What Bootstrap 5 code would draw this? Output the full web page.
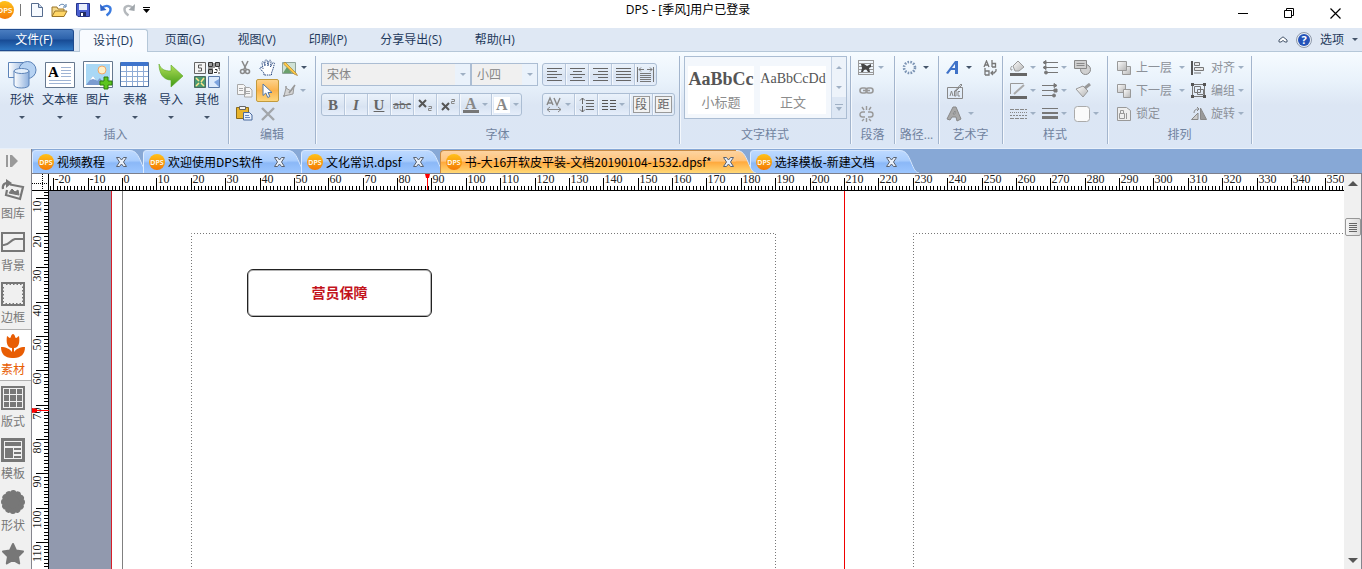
<!DOCTYPE html>
<html lang="zh-CN">
<head>
<meta charset="utf-8">
<meta name="viewport" content="width=device-width, initial-scale=1">
<title>DPS</title>
<link href="https://cdn.jsdelivr.net/npm/bootstrap@5.3.0/dist/css/bootstrap.min.css" rel="stylesheet">
<style>
  body { font: 12px/16px "Open Sans", "Noto Sans CJK SC", sans-serif; color: #1e395b; background: #fff; }
  svg { display: block; flex: none; }
  button { color: inherit; }
  .plain { background: none; border: 0; padding: 0; display: flex; align-items: center; justify-content: center; flex: none; }
  .tri { width: 0; height: 0; border: 3px solid transparent; border-top-color: #44546a; border-bottom: 0; flex: none; }
  .off .tri, .tri.off { border-top-color: #9fb0c4; }

  /* title bar */
  .titlebar { height: 28px; color: #000; }
  .titlebar .caption { line-height: 20px; }
  .quick { width: 156px; height: 20px; }
  .quick .plain { width: 23px; height: 20px; }
  .quick .more { width: 13px; }
  .quick .bar { width: 1px; height: 12px; background: #777; }
  .logo-cut { width: 14px; margin-right: 6px; overflow: hidden; direction: rtl; }
  .winbtn { width: 46px; height: 26px; }

  /* menu */
  .menu { height: 24px; background: #dfe8f4; border-bottom: 1px solid #b5c7d8; }
  .menu .entry { height: 24px; line-height: 24px; padding: 0 17px 0 16px; color: #1e395b; text-decoration: none; }
  .menu .file { width: 74px; height: 22px; padding: 0 5px 0 0; margin: 1px 5px 0 0; line-height: 20px; text-align: center; color: #fff; border: 1px solid #1f4b8e; border-left: 0; border-radius: 0 3px 0 0; background: linear-gradient(#4a7dc0, #2c62ab 45%, #174a94 50%, #2f78c4); }
  .menu .current { padding: 0 14px 0 13px; background: #f8fbff; border: 1px solid #b5c7d8; border-bottom: 0; border-radius: 3px 3px 0 0; margin: 1px 1px 0 0; line-height: 22px; }

  /* ribbon */
  .ribbon { height: 97px; padding: 4px 0; background: linear-gradient(#f6fbff, #e9f2fb 30%, #dce6f4 55%, #dbe6f5); border-bottom: 1px solid #e8f0fa; }
  .grp { height: 88px; flex: none; border-right: 1px solid #a3b5cd; box-shadow: 1px 0 #f4f8fd; display: flex; flex-direction: column; }
  .grp-body { height: 69px; }
  .grp-name { height: 19px; line-height: 19px; text-align: center; color: #71839f; }
  .w-insert { width: 229px; padding-left: 3px; } .w-edit { width: 87px; } .w-font { width: 364px; } .w-look { width: 171px; }
  .w-slim { width: 44px; } .w-art { width: 64px; } .w-style { width: 105px; } .w-order { width: 144px; }
  .big { width: 38px; height: 69px; flex-direction: column; justify-content: flex-start; padding-top: 4px; }
  .big.b36 { width: 36px; }
  .big span.cap { white-space: nowrap; margin: 1px 0 7px; line-height: 18px; }
  .line { display: flex; height: 23px; align-items: center; }
  .line .plain { width: 23px; height: 23px; }
  .line .drop { width: 32px; justify-content: flex-start; gap: 3px; padding-left: 3px; }
  .line .wide { width: 36px; justify-content: flex-start; gap: 6px; padding-left: 3px; }
  .line .worded { width: 75px; gap: 4px; justify-content: flex-start; color: #8c9199; }
  .line .worded .tri { margin-left: 3px; }
  .line .worded.narrow { width: 60px; }
  .line .worded.narrow .tri { margin-left: -1px; }
  .line .worded.narrow svg { width: 16px; }
  .picked { background: linear-gradient(#fdd28a, #fbb34c 50%, #fdd67c); border: 1px solid #c29a3c; border-radius: 2px; }
  .font-rows { display: flex; flex-direction: column; gap: 7px; padding: 7px 0 0 5px; }
  .combo { height: 23px; border: 1px solid #abbdd3; border-radius: 0; color: #868686; font-size: 12px; padding: 0 18px 0 5px; appearance: none;
    background: url("data:image/svg+xml,%3Csvg xmlns='http://www.w3.org/2000/svg' width='15' height='21'%3E%3Cpath d='M0 0h15v21H0z' fill='%23eaf2fb'/%3E%3Cpath d='M5 9h6l-3 3z' fill='%239fb0c4'/%3E%3C/svg%3E") right top no-repeat #f0f0f0; }
  .face { width: 150px; } .size { width: 67px; }
  .strip { display: flex; height: 23px; border: 1px solid #abbdd3; border-radius: 3px; background: linear-gradient(#eaf2fb, #dce6f3 50%, #d8e3f2 60%, #e6eefa); color: #666; }
  .strip svg { overflow: visible; }
  .strip .plain { width: 23px; height: 21px; gap: 3px; border-right: 1px solid #b9c8dc; box-shadow: 1px 0 #f4f8fd; }
  .strip .plain:last-child { border-right: 0; box-shadow: none; width: 21px; }
  .strip .plain.fat { width: 32px; }
  .strip .plain.fat:last-child { width: 29px; }
  .strip .struck { font-size: 11px; text-decoration: line-through; }
  .glyph { font: bold 15px/20px "Liberation Serif", serif; }
  .cjkbox { width: 17px; height: 17px; line-height: 15px; border: 1px solid #9a9a9a; background: #f2f2f2; font-size: 12px; }
  .gallery { width: 163px; height: 63px; border: 1px solid #abbdd3; background: #f3f7fc; margin-left: 4px; }
  .tile { width: 66px; height: 48px; background: #fff; border: 0; padding: 0; overflow: hidden; color: #8c8c8c; margin: 9px 3px 0; white-space: nowrap; }
  .tile b, .tile i { display: block; font: 14px/24px "Liberation Serif", serif; color: #555; }
  .tile b { font-size: 18px; font-weight: bold; }
  .tile span { display: block; line-height: 22px; font-size: 13px; }
  .spin { width: 15px; border-left: 1px solid #c4d2e4; margin-left: auto; background: #edf3fa; }
  .spin .plain { height: 20px; width: 14px; }
  .spin .plain:last-child { background: #dde7f4; height: 21px; }
  .up { transform: rotate(180deg); }

  /* side panel */
  .side { width: 32px; flex: none; background: #f0f0f0; border-right: 1px solid #85858d; color: #777; overflow: hidden; }
  .fold { width: 24px; height: 24px; }
  .pane { width: 31px; height: 52px; flex-direction: column; align-items: flex-start; justify-content: flex-start; padding: 5px 0 0 1px; }
  .pane span { line-height: 16px; margin-top: 4px; }
  .pane.active { background: #fff; color: #e85d04; border-top: 1px solid #b0b0b0; border-bottom: 1px solid #b0b0b0; padding-top: 4px; }

  /* document tabs */
  .docs { height: 25px; background: #87a8d6; border-bottom: 1px solid #7c7f8c; color: #000; font-family: "Noto Sans CJK SC", sans-serif; }
  .doc { height: 23px; margin: 1px 14px 0 0; padding: 0 0 0 5px; position: relative; gap: 3px; white-space: nowrap; border-left: 1px solid #dcebff; border-top: 1px solid #d5e6fd; border-radius: 4px 0 0 0;
    background: linear-gradient(#bdd9ff, #a9cdfd 45%, #8bb8f7 55%, #9cc6ff); }
  .doc .tail { position: absolute; left: 100%; top: -1px; }
  .doc .plain { margin: 0 2px 0 8px; }
  .doc a { color: #000; text-decoration: none; }
  .doc.on { background: linear-gradient(#fdd3a0, #ffc47c 45%, #ffaa3e 52%, #ffd877); border-color: #c88c46; z-index: 2; }

  /* rulers and page */
  .corner { width: 17px; height: 17px; flex: none; border-right: 1px solid #000; border-bottom: 1px solid #000; background: #fff; }
  .rule-h { height: 17px; border-bottom: 1px solid #000; min-width: 0; overflow: visible; }
  .rule-v { width: 17px; border-right: 1px solid #000; background: #fff; overflow: visible; }
  .rule-h text, .rule-v text { font: 12px "Liberation Serif", serif; fill: #222; }
  .desk { background: #fff; overflow: hidden; position: relative; }
  .gutter { position: absolute; inset: 0 auto 0 0; width: 63px; background: #9199ae; border-right: 1px solid #d81e28; }
  .edge { position: absolute; top: 0; bottom: 0; left: 73px; width: 1px; background: #808080; }
  .fold-line { position: absolute; top: 0; bottom: 0; left: 795px; width: 1px; background: #f00000; }
  .frame { position: absolute; top: 42px; bottom: -10px; }
  .left-page { left: 142px; width: 586px; }
  .right-page { left: 864px; width: 586px; }
  .textbox { position: absolute; left: 198px; top: 78px; width: 185px; height: 48px; border: 1px solid #222; box-shadow: inset 0 0 0 1px #b4b4b4; border-radius: 6px; color: #c3141c; font-size: 14px; font-weight: 700; }
  .scroll { width: 18px; background: #f0f0f0; border-right: 1px solid #85858d; padding-left: 1px; z-index: 1; }
  .scroll .arrow { height: 18px; }
  .thumb { width: 16px; height: 18px; border: 1px solid #979797; border-radius: 2px; background: linear-gradient(90deg, #f5f5f5, #dcdcdc); margin-top: 26px; }
  .stretch { min-width: 0; min-height: 0; }
</style>
</head>
<body class="vh-100 d-flex flex-column overflow-hidden">

<svg width="0" height="0" class="position-absolute" aria-hidden="true">
  <defs>
    <linearGradient id="gOrange" x2="0" y2="1"><stop stop-color="#ffc21a"/><stop offset="1" stop-color="#f47a05"/></linearGradient>
    <linearGradient id="gSilver" x2="1" y2="1"><stop stop-color="#fdfdfd"/><stop offset="1" stop-color="#b4b4b4"/></linearGradient>
    <linearGradient id="gBlue" x2="1" y2="0"><stop stop-color="#fff"/><stop offset="1" stop-color="#8db0de"/></linearGradient>
    <linearGradient id="gTab" x2="0" y2="1"><stop stop-color="#bdd9ff"/><stop offset=".45" stop-color="#a9cdfd"/><stop offset=".55" stop-color="#8bb8f7"/><stop offset="1" stop-color="#9cc6ff"/></linearGradient>
    <linearGradient id="gHot" x2="0" y2="1"><stop stop-color="#fdd3a0"/><stop offset=".45" stop-color="#ffc47c"/><stop offset=".52" stop-color="#ffaa3e"/><stop offset="1" stop-color="#ffd877"/></linearGradient>
    <linearGradient id="gLeaf" x2="0" y2="1"><stop stop-color="#b4e05a"/><stop offset="1" stop-color="#3f9a14"/></linearGradient>
    <symbol id="dps" viewBox="0 0 16 16"><circle cx="8" cy="8" r="8" fill="url(#gOrange)"/><text x="8" y="10.500" text-anchor="middle" font-family="Open Sans" font-size="7" font-weight="600" fill="#fff">DPS</text></symbol>
    <symbol id="shut" viewBox="0 0 11 10"><path d="M.5.5h3l2 2.500 2-2.500h3L7.500 5l3 4.500h-3l-2-2.500-2 2.500h-3L3.500 5z" fill="#e8f0fb" stroke="#5a6270"/></symbol>
    <symbol id="tail" viewBox="0 0 20 23"><path d="M0 0C7 0 9 5 12 12s4 10 8 11H0z"/><path d="M0 .5C7 .5 9 5 12 12s4 10 8 11" fill="none" stroke="#d5e6fd"/></symbol>
  </defs>
</svg>

<header class="titlebar d-flex flex-shrink-0">
  <div class="quick d-flex align-items-center">
    <span class="logo-cut"><svg width="18" height="18"><use href="#dps"/></svg></span>
    <span class="bar"></span>
    <button class="plain ms-1" aria-label="新建"><svg width="12" height="14" viewBox="0 0 12 14"><path d="M.5.5h7l4 4v9H.5z" fill="#f6faff" stroke="#566c8e"/><path d="M7.500.5v4h4" fill="#c9d6ea" stroke="#566c8e"/></svg></button>
    <button class="plain" aria-label="打开"><svg width="17" height="15" viewBox="0 0 17 15"><path d="M1 13V4h5l1 2h6v3" fill="#f5d98a" stroke="#9a7426"/><path d="M1 13.500 4 8h12l-3 5.500z" fill="#ffd667" stroke="#9a7426"/><path d="M8 3c2-2.500 5-2 6 0m1-2v3h-3" fill="none" stroke="#4a76a8"/></svg></button>
    <button class="plain" aria-label="保存"><svg width="14" height="14" viewBox="0 0 14 14"><path d="M.5.5h13v13H2l-1.500-1.500z" fill="#4a5fd0" stroke="#26368c"/><path d="M3 1h8v6H3z" fill="#e8eefc"/><path d="M4 9h6v4H4z" fill="#222c60"/><path d="M5 10h2v3H5z" fill="#fff"/></svg></button>
    <button class="plain" aria-label="撤销"><svg width="14" height="14" viewBox="0 0 14 14"><path d="M2.500 5.500C7 1 12 3 11.500 7c-.3 3-2.500 4.500-4 5.500" fill="none" stroke="#3b7be0" stroke-width="2.400"/><path d="m1 1 .5 7 6-1z" fill="#2d62c8"/></svg></button>
    <button class="plain" aria-label="重做"><svg width="14" height="14" viewBox="0 0 14 14"><path d="M11.500 5.500C7 1 2 3 2.500 7c.3 3 2.500 4.500 4 5.500" fill="none" stroke="#b4b8bc" stroke-width="2.400"/><path d="m13 1-.5 7-6-1z" fill="#a0a6ab"/></svg></button>
    <button class="plain more" aria-label="自定义"><svg width="7" height="6" viewBox="0 0 7 6"><path d="M0 0h7v1H0zM0 2h7L3.500 6z"/></svg></button>
  </div>
  <div class="caption flex-grow-1 text-center">DPS - [季风]用户已登录</div>
  <button class="plain winbtn" aria-label="最小化"><svg width="11" height="11"><path d="M0 5.500h10" stroke="#000"/></svg></button>
  <button class="plain winbtn" aria-label="还原"><svg width="11" height="11" fill="none" stroke="#000"><path d="M.5 2.500h7v7h-7zM2.500 2.500v-2h7v7h-2"/></svg></button>
  <button class="plain winbtn me-1" aria-label="关闭"><svg width="11" height="11"><path d="m.5.5 10 10m0-10-10 10" stroke="#000" stroke-width="1.200"/></svg></button>
</header>

<nav class="menu d-flex flex-shrink-0">
  <a href="#" class="entry file">文件(F)</a>
  <a href="#" class="entry current">设计(D)</a>
  <a href="#" class="entry">页面(G)</a>
  <a href="#" class="entry">视图(V)</a>
  <a href="#" class="entry">印刷(P)</a>
  <a href="#" class="entry">分享导出(S)</a>
  <a href="#" class="entry">帮助(H)</a>
  <div class="ms-auto d-flex align-items-center gap-2 pe-1">
    <button class="plain" aria-label="收起"><svg width="10" height="7" viewBox="0 0 10 7"><path d="M1 4 5 .8 9 4v2H7L5 4.500 3 6H1z" fill="#fff" stroke="#44546a"/></svg></button>
    <button class="plain" aria-label="帮助"><svg width="16" height="16" viewBox="0 0 16 16"><circle cx="8" cy="8" r="7.500" fill="#e8eef6" stroke="#8f9aaa"/><circle cx="8" cy="8" r="6" fill="#2453b8"/><text x="8" y="12" text-anchor="middle" font-family="Open Sans" font-weight="700" font-size="11" fill="#fff">?</text></svg></button>
    <button class="plain gap-2"><span>选项</span><span class="tri"></span></button>
  </div>
</nav>

<section class="ribbon d-flex flex-shrink-0">
  <div class="grp w-insert">
    <div class="grp-body d-flex">
      <button class="plain big"><svg width="32" height="30" viewBox="0 0 32 30" stroke="#5c83b8"><path d="M2.500 2.500h17v15h-17z" fill="url(#gBlue)"/><circle cx="21.500" cy="10" r="8.500" fill="#b6d2f2"/><path d="M8 11v14c0 4 15 4 15 0V11" fill="url(#gBlue)"/><ellipse cx="15.500" cy="11" rx="7.500" ry="2.500" fill="#e4effb"/></svg><span class="cap">形状</span><span class="tri"></span></button>
      <button class="plain big"><svg width="30" height="30" viewBox="0 0 30 30"><path d="M.5 2.500h29v25H.5z" fill="#fff" stroke="#66788f"/><text x="3" y="17" font-family="Liberation Serif" font-weight="700" font-size="15">A</text><path d="M16 7.500h10M16 10.500h10M16 13.500h10M16 16.500h10M4 20.500h22M4 23.500h22" stroke="#9fb4d4"/></svg><span class="cap">文本框</span><span class="tri"></span></button>
      <button class="plain big"><svg width="30" height="30" viewBox="0 0 30 30"><path d="M.5 1.500h29v26H.5z" fill="#fff" stroke="#66788f"/><path d="M3 4h24v21H3z" fill="#a9d8f5"/><circle cx="19" cy="10" r="4" fill="#fff0c8" stroke="#f0a868"/><path d="m3 25 7-9 4 5 3-3 5 7z" fill="#7b9cd0"/><path d="m7 20 3-4 3 4-3-1z" fill="#fff"/><path d="M21 17h4v4h4v4h-4v4h-4v-4h-4v-4h4z" fill="#5cc51e" stroke="#2c7c0c"/></svg><span class="cap">图片</span><span class="tri"></span></button>
      <button class="plain big b36"><svg width="30" height="30" viewBox="0 0 30 30"><path d="M.5 2.500h28v24H.5z" fill="#fff" stroke="#4d6f9f"/><path d="M1 2h27v4H1z" fill="#3e74cc"/><path d="M1 11.500h27M1 16.500h27M1 21.500h27M6.500 6v20M12.500 6v20M17.500 6v20M23.500 6v20" stroke="#8facd6"/></svg><span class="cap">表格</span><span class="tri"></span></button>
      <button class="plain big b36"><svg width="28" height="30" viewBox="0 0 28 30"><path d="M2 4c2 5 5 7 12 7V5l12 11-12 11v-7C6 20 2 13 2 4z" fill="url(#gLeaf)" stroke="#5aa825" stroke-width=".6"/></svg><span class="cap">导入</span><span class="tri"></span></button>
      <button class="plain big b36"><svg width="26" height="30" viewBox="0 0 26 30"><path d="M.5 2.500h11v11H.5z" fill="#f4f4f4" stroke="#666"/><path d="M8 5H4.500v3h3v3H4" fill="none" stroke="#555"/><path d="M14 2h12v12H14z" fill="#fff"/><path d="M14.500 2.500h4v4h-4zM21.500 2.500h4v4h-4zM14.500 9.500h4v4h-4z" fill="#999" stroke="#333"/><path d="M20 3v5M14 8h5M21 9.500h2v2M24 8h2v3M20 12.500h3M24 13h2" fill="none" stroke="#333"/><path d="M.5 16.500h11v11H.5z" fill="#4a9a70" stroke="#4a6a60"/><path d="m2 18 3 3m5-3-3 4m-5 4 3-3m5 3-3-3" stroke="#ffe48c" stroke-width="1.500"/><path d="M14.500 16.500h11v11h-11z" fill="#dbe9fb" stroke="#5878a8"/><path d="m15 17 10 10v-8l-5 3z" fill="#7da4e0"/></svg><span class="cap">其他</span><span class="tri"></span></button>
    </div>
    <div class="grp-name">插入</div>
  </div>

  <div class="grp w-edit">
    <div class="grp-body px-1">
      <div class="line">
        <button class="plain" aria-label="剪切"><svg width="12" height="15" viewBox="0 0 12 15" fill="none" stroke="#8a8a8a" stroke-width="1.600"><path d="m3 1 4.500 9M9 1l-4.500 9"/><circle cx="3.500" cy="11.500" r="2"/><circle cx="8.500" cy="11.500" r="2"/></svg></button>
        <button class="plain" aria-label="抓手"><svg width="17" height="17" viewBox="0 0 17 17"><path d="M5 16v-2L1 9.500c0-2 2-1.500 3 0L3 4c0-2 2-1.500 2.200 0L6 7V2c.5-1.800 2-1.500 2.200 0L9 7l1-5c.5-1.500 2-1 2 .5L11.500 8 13.500 4c1-1 2.200-.3 1.800 1L14 10l-1.500 4v2z" fill="#fff" stroke="#2c4a80" stroke-dasharray="1.500 .8"/></svg></button>
        <button class="plain drop" aria-label="编辑图片"><svg width="16" height="16" viewBox="0 0 16 16"><path d="M.5 2.500h13v11H.5z" fill="#cfe2d6" stroke="#8fa39a"/><path d="m1 13 4-6 5 6z" fill="#6aa06c"/><path d="m3 2 11 11 1.500 2.500L12 14 1.500 4z" fill="#ffcb45" stroke="#a8803a" stroke-width=".7"/></svg><span class="tri"></span></button>
      </div>
      <div class="line off">
        <button class="plain" aria-label="复制"><svg width="16" height="14" viewBox="0 0 16 14" fill="#f6f6f6" stroke="#a8a8a8"><path d="M.5.5h6l2 2v8h-8zM7.500 3.500h5l2.500 2.500v7H7.500z"/><path d="M2 4.500h4M2 6.500h4M9 7.500h4M9 9.500h4"/></svg></button>
        <button class="plain picked" aria-label="选择"><svg width="11" height="16" viewBox="0 0 11 16"><path d="M1 1v11.500l2.800-2.500 2 4.500 2-1L6 9.500h4z" fill="#fff" stroke="#5078a8"/></svg></button>
        <button class="plain drop" aria-label="节点"><svg width="15" height="14" viewBox="0 0 15 14" fill="#d4d4d4" stroke="#999"><path d="M2 12 4 4l5 3 3-5-1 8z"/><path d="m13 1-6 8M1 12h2M3 3h2" stroke-width="1.600"/></svg><span class="tri"></span></button>
      </div>
      <div class="line">
        <button class="plain" aria-label="粘贴"><svg width="17" height="15" viewBox="0 0 17 15"><path d="M.5 1.500h12v11H.5z" fill="#e8b42c" stroke="#8a6a1c"/><path d="M3.500.5h6v3h-6z" fill="#f4f4f4" stroke="#666"/><path d="M7.500 6.500h6l2.500 2.500v5H7.500z" fill="#e8f0fc" stroke="#49689c"/><path d="M9 9.500h4M9 11.500h5" stroke="#6a88bc"/></svg></button>
        <button class="plain" aria-label="删除"><svg width="14" height="14" viewBox="0 0 14 14"><path d="m1 1 12 12M13 1 1 13" stroke="#a2a6aa" stroke-width="2.400"/></svg></button>
      </div>
    </div>
    <div class="grp-name">编辑</div>
  </div>

  <div class="grp w-font off">
    <div class="grp-body font-rows">
      <div class="d-flex">
        <select class="combo face" aria-label="字体"><option>宋体</option></select>
        <select class="combo size" aria-label="字号"><option>小四</option></select>
        <div class="strip ms-1">
          <button class="plain" aria-label="左对齐"><svg width="15" height="13" stroke="#666"><path d="M0 .5h15M0 3.500h10M0 6.500h15M0 9.500h10M0 12.500h15"/></svg></button>
          <button class="plain" aria-label="居中"><svg width="15" height="13" stroke="#666"><path d="M0 .5h15M3 3.500h9M0 6.500h15M3 9.500h9M0 12.500h15"/></svg></button>
          <button class="plain" aria-label="右对齐"><svg width="15" height="13" stroke="#666"><path d="M0 .5h15M5 3.500h10M0 6.500h15M5 9.500h10M0 12.500h15"/></svg></button>
          <button class="plain" aria-label="两端对齐"><svg width="15" height="13" stroke="#666"><path d="M0 .5h15M0 3.500h15M0 6.500h15M0 9.500h15M0 12.500h15"/></svg></button>
          <button class="plain" aria-label="分散对齐"><svg width="17" height="15" stroke="#777" fill="none"><path d="M.5 0v15M16.500 0v15M2 2.500h5M10 2.500h5M4 .5l-2 2 2 2M13 .5l2 2-2 2M3 6.500h11M3 8.500h11M3 10.500h11M3 12.500h11M3 14.500h11"/></svg></button>
        </div>
      </div>
      <div class="d-flex gap-3">
        <div class="strip">
          <button class="plain glyph">B</button>
          <button class="plain glyph fst-italic">I</button>
          <button class="plain glyph text-decoration-underline">U</button>
          <button class="plain struck">abc</button>
          <button class="plain" aria-label="下标"><svg width="15" height="14" fill="none" stroke="#555"><path d="m1 2 7 7M8 2 1 9" stroke-width="2"/><path d="M10.500 8.500h3v2h-3v2h3" stroke="#888"/></svg></button>
          <button class="plain" aria-label="上标"><svg width="15" height="14" fill="none" stroke="#555"><path d="m1 5 7 7M8 5l-7 7" stroke-width="2"/><path d="M10.500 1.500h3v2h-3v2h3" stroke="#888"/></svg></button>
          <button class="plain fat" aria-label="字色"><svg width="16" height="16"><text x="2" y="12" font-family="Liberation Serif" font-weight="700" font-size="16" fill="#888">A</text><path d="M0 13h16v3H0z" fill="#777"/></svg><span class="tri"></span></button>
          <button class="plain fat" aria-label="底色"><svg width="16" height="16"><path d="M0 0h16v16H0z" fill="#fff"/><text x="2" y="13" font-family="Liberation Serif" font-weight="700" font-size="16" fill="#888">A</text></svg><span class="tri"></span></button>
        </div>
        <div class="strip ms-1">
          <button class="plain fat" aria-label="字距"><svg width="16" height="16" fill="none" stroke="#888"><path d="m1 8 3-7 3 7M2 6h4M8 1l3 7 3-7" stroke-width="1.400"/><path d="M1 12.500h14M4 10l-3 2.500L4 15M12 10l3 2.500-3 2.500"/></svg><span class="tri"></span></button>
          <button class="plain" aria-label="行距"><svg width="15" height="16" fill="none" stroke="#666"><path d="M3.500 1v6M1 3.500 3.500 1 6 3.500M3.500 9v6M1 12.500 3.500 15 6 12.500M7 3.500h8M7 6.500h8M7 9.500h8M7 12.500h8"/></svg></button>
          <button class="plain fat" aria-label="分栏"><svg width="14" height="12" stroke="#555"><path d="M0 1.500h6M0 4.500h6M0 7.500h6M0 10.500h6M8 1.500h6M8 4.500h6M8 7.500h6M8 10.500h6"/></svg><span class="tri"></span></button>
          <button class="plain"><span class="cjkbox">段</span></button>
          <button class="plain"><span class="cjkbox">距</span></button>
        </div>
      </div>
    </div>
    <div class="grp-name">字体</div>
  </div>

  <div class="grp w-look off">
    <div class="grp-body">
      <div class="gallery d-flex">
        <button class="tile"><b>AaBbCc</b><span>小标题</span></button>
        <button class="tile"><i>AaBbCcDd</i><span>正文</span></button>
        <div class="spin"><button class="plain" aria-label="上一行"><span class="tri up"></span></button><button class="plain" aria-label="下一行"><span class="tri"></span></button><button class="plain" aria-label="更多样式"><svg width="8" height="8" fill="#9fb0c4"><path d="M0 0h8v1H0zM1 3h6L4 7z"/></svg></button></div>
      </div>
    </div>
    <div class="grp-name">文字样式</div>
  </div>

  <div class="grp w-slim off">
    <div class="grp-body ps-1">
      <div class="line"><button class="plain wide gap-1" aria-label="环绕"><svg width="16" height="15" fill="none" stroke="#999"><path d="M0 .5h16M0 3.500h16M0 6.500h16M0 9.500h16M0 12.500h16"/><path d="M.5 0v15M15.500 0v15M0 14.500h16"/><path d="M3 4h3l3 2 4-2v3l-2 1 1 4h-2L8 9l-2 1-1 2H3l1-4z" fill="#444" stroke="none"/></svg><span class="tri"></span></button></div>
      <div class="line"><button class="plain" aria-label="链接"><svg width="15" height="8" fill="none" stroke="#999" stroke-width="1.600"><rect x="1" y="1" width="7" height="5" rx="2.500"/><rect x="7" y="1" width="7" height="5" rx="2.500"/><path d="M4 3.500h7"/></svg></button></div>
      <div class="line"><button class="plain" aria-label="取消链接"><svg width="15" height="16" fill="none" stroke="#999" stroke-width="1.400"><path d="M6 6H3.500a2.500 2.500 0 0 0 0 5H6M9 6h2.500a2.500 2.500 0 0 1 0 5H9M7.500 0v4M7.500 12v4M3 1l2 3M12 1l-2 3M3 15l2-2M12 15l-2-2"/></svg></button></div>
    </div>
    <div class="grp-name">段落</div>
  </div>

  <div class="grp w-slim">
    <div class="grp-body ps-1">
      <div class="line"><button class="plain wide" aria-label="路径"><svg width="15" height="15" fill="none" stroke="#7c94b4"><circle cx="7.500" cy="7.500" r="5.500" stroke-width="2.600" stroke-dasharray="1.600 1.300"/></svg><span class="tri"></span></button></div>
    </div>
    <div class="grp-name">路径...</div>
  </div>

  <div class="grp w-art">
    <div class="grp-body ps-1">
      <div class="line"><button class="plain wide" aria-label="艺术字"><svg width="14" height="15"><path d="M0 13 9 1h3v13H9v-4H5l-3 4zM6 8h3V4z" fill="#3f72c8" fill-rule="evenodd"/></svg><span class="tri"></span></button>
        <button class="plain" aria-label="替换"><svg width="15" height="16" fill="none" stroke="#777" stroke-width="1.300"><path d="m1 7 2.500-6L6 7M2 5h3M9 0v7M9 3.500h3.500V7H9"/><path d="M2 8v7M2 11h4v4H2M8 13h3l2-2V9M10 11l-2 2 2 2"/></svg></button></div>
      <div class="line"><button class="plain" aria-label="编辑文字"><svg width="16" height="16" fill="none" stroke="#888"><path d="M.5 4.500h15v11H.5z"/><path d="m3 13 1.500-5L6 13M7.500 8v5H9V8zM13 8.500h-2V13h2M8 8l6-7 1 1-6 6"/></svg></button></div>
      <div class="line off"><button class="plain wide" aria-label="文字效果"><svg width="16" height="16"><path d="M1 13 7 1h3l5 12-4 2-1-4H6l-2 3zM7 8h2V5z" fill="#a8a8a8" stroke="#888"/></svg><span class="tri"></span></button></div>
    </div>
    <div class="grp-name">艺术字</div>
  </div>

  <div class="grp w-style off">
    <div class="grp-body ps-1">
      <div class="line">
        <button class="plain drop" aria-label="填充"><svg width="17" height="16"><path d="m3 6 5-5 6 6-5 4H5z" fill="url(#gSilver)" stroke="#999"/><path d="M2 6c-3 3 0 6 0 3" fill="none" stroke="#999"/><path d="M0 13h17v3H0z" fill="#666"/></svg><span class="tri"></span></button>
        <button class="plain drop" aria-label="起点箭头"><svg width="16" height="15" stroke="#777" fill="#777"><path d="M3 2.500h13M3 7.500h13M3 12.500h13"/><path d="m1 2.500 3-2v4zM1 7.500l3-2v4z"/><circle cx="4" cy="12.500" r="1.500"/></svg><span class="tri"></span></button>
        <button class="plain" aria-label="阴影"><svg width="17" height="15" fill="#d0d0d0" stroke="#888"><circle cx="11.500" cy="9.500" r="5"/><path d="M.5.5h12v8H.5z"/><path d="M2.500 3.500h8M2.500 5.500h8"/></svg></button>
      </div>
      <div class="line">
        <button class="plain drop" aria-label="轮廓"><svg width="17" height="16"><path d="M.5 11V.5h13" fill="none" stroke="#999"/><path d="m4 11 10-9" stroke="#aaa" stroke-width="2"/><path d="M0 13h17v3H0z" fill="#666"/></svg><span class="tri"></span></button>
        <button class="plain drop" aria-label="终点箭头"><svg width="16" height="15" stroke="#777" fill="#777"><path d="M0 2.500h13M0 7.500h13M0 12.500h13"/><path d="m15 2.500-3-2v4zM12 6h3v3h-3z"/><circle cx="12" cy="12.500" r="1.500"/></svg><span class="tri"></span></button>
        <button class="plain" aria-label="格式刷"><svg width="16" height="15"><path d="m1 6 7-3 5 5-5 6z" fill="url(#gSilver)" stroke="#999"/><path d="m10 5 5-4" stroke="#999" stroke-width="3"/></svg></button>
      </div>
      <div class="line">
        <button class="plain drop" aria-label="线型"><svg width="17" height="10" stroke="#888"><path d="M0 .5h17M0 9.500h17" stroke-dasharray="4 1"/><path d="M0 3.500h17" stroke-dasharray="1 1"/><path d="M0 6.500h17" stroke-dasharray="2 1"/></svg><span class="tri"></span></button>
        <button class="plain drop" aria-label="线宽"><svg width="16" height="11" fill="#777"><path d="M0 0h16v1H0zM0 4h16v2H0zM0 8h16v3H0z"/></svg><span class="tri"></span></button>
        <button class="plain drop" aria-label="效果"><svg width="16" height="16"><rect x=".5" y=".5" width="15" height="15" rx="3" fill="#fafafa" stroke="#aaa"/></svg><span class="tri"></span></button>
      </div>
    </div>
    <div class="grp-name">样式</div>
  </div>

  <div class="grp w-order off">
    <div class="grp-body ps-2">
      <div class="line">
        <button class="plain worded"><svg width="16" height="14" fill="url(#gSilver)" stroke="#999"><path d="M6.500 5.500h8v8h-8z"/><path d="M1.500.5h9v9h-9z"/></svg>上一层<span class="tri"></span></button>
        <button class="plain worded narrow"><svg width="14" height="14" stroke="#777" fill="#e8e8e8"><path d="M1 0v14" stroke-width="2" stroke="#555"/><path d="M3.500 1.500h5v3h-5zM3.500 6.500h9v3h-9zM3 12h7"/></svg>对齐<span class="tri"></span></button>
      </div>
      <div class="line">
        <button class="plain worded"><svg width="16" height="14" fill="url(#gSilver)" stroke="#999"><path d="M1.500.5h8v8h-8z"/><path d="M7.500 5.500h7v8h-7z"/></svg>下一层<span class="tri"></span></button>
        <button class="plain worded narrow"><svg width="15" height="15" stroke="#777" fill="none"><path d="M1.500 1.500h12v12h-12zM3.500 3.500h6v6h-6zM6.500 6.500h6v5h-6z"/><path d="M0 0h3v3H0zM12 0h3v3h-3zM0 12h3v3H0zM12 12h3v3h-3z" fill="#555" stroke="none"/></svg>编组<span class="tri"></span></button>
      </div>
      <div class="line">
        <button class="plain worded"><svg width="16" height="14" fill="#eee" stroke="#999"><path d="M1.500.5h9l4 3v10h-13z"/><path d="M3.500 6.500h5v5h-5zM4.500 6V3.500h3V6M10.500 6v6"/></svg>锁定</button>
        <button class="plain worded narrow"><svg width="16" height="13" stroke="#888" fill="#ccc"><path d="M.5 12.500 7 6v6.500z"/><path d="M9.500 12.500V1l6 11.500z" fill="#999"/><path d="M3 6c0-3 2-4 4-4M6 0l2 2-2 2" fill="none"/></svg>旋转<span class="tri"></span></button>
      </div>
    </div>
    <div class="grp-name">排列</div>
  </div>
</section>

<main class="d-flex flex-grow-1 stretch">
  <aside class="side">
    <button class="plain fold" aria-label="展开"><svg width="12" height="12" viewBox="0 0 12 12" fill="#9a9a9a"><path d="M0 0h2v12H0zM4 0h2v12H4zM6 0l6 6-6 6z"/></svg></button>
    <button class="plain pane"><svg width="24" height="24" viewBox="0 0 24 24" fill="none" stroke="#777" stroke-width="2.200"><path d="m9 6.500 13 2.500-3 12-14-4 1-5"/><path d="M2 11c-1-4 2-7 6-6"/><path d="m5 1 6 4-6 5z" fill="#777" stroke="none"/><path d="m8 15 3-4 3 3 3-2 1 5z" fill="#777" stroke-width="1"/></svg><span>图库</span></button>
    <button class="plain pane"><svg width="24" height="24" viewBox="0 0 24 24" fill="none" stroke="#777"><path d="M1 3h22v18H1z" stroke-width="2"/><path d="M2 15c6 1 7-5 12-6h8" stroke-width="2"/></svg><span>背景</span></button>
    <button class="plain pane"><svg width="24" height="24" viewBox="0 0 24 24"><path d="M0 0h24v24H0z" fill="#777"/><path d="M3 3h18v18H3z" fill="#f0f0f0" stroke="#f0f0f0" stroke-width="2" stroke-dasharray="2 1.500"/></svg><span>边框</span></button>
    <button class="plain pane active"><svg width="24" height="24" viewBox="0 0 24 24" fill="#e85d04"><path d="M6 2c2 1 2 2 3 2s1-4 3-4 2 4 3 4 1-1 3-2c1 6 0 12-5 12v4c2-3 6-5 11-5 0 7-4 11-11 11h-2C4 24 0 20 0 13c5 0 9 2 11 5v-4C6 14 5 8 6 2z"/></svg><span>素材</span></button>
    <button class="plain pane"><svg width="24" height="24" viewBox="0 0 24 24"><path d="M1 1h22v22H1z" fill="#f0f0f0" stroke="#777" stroke-width="2"/><path d="M3 3h5v5H3zM9 3h6v5H9zM16 3h5v5h-5zM3 9h5v6H3zM9 9h6v6H9zM16 9h5v6h-5zM3 16h5v5H3zM9 16h6v5H9zM16 16h5v5h-5z" fill="#777"/></svg><span>版式</span></button>
    <button class="plain pane"><svg width="24" height="24" viewBox="0 0 24 24"><path d="M1.500 1.500h21v21h-21z" fill="#f0f0f0" stroke="#777" stroke-width="3"/><path d="M4 4h16v4H4zM4 10h8v10H4zM13 10h7v2h-7zM13 14h7v2h-7zM13 18h7v2h-7z" fill="#777"/></svg><span>模板</span></button>
    <button class="plain pane"><svg width="24" height="24" viewBox="0 0 24 24" fill="#777"><circle cx="12" cy="12" r="10"/><circle cx="12" cy="12" r="9" fill="none" stroke="#777" stroke-width="6" stroke-linecap="round" stroke-dasharray=".1 4.610"/></svg><span>形状</span></button>
    <button class="plain pane" aria-label="收藏"><svg width="24" height="24" viewBox="0 0 24 24"><path d="m12 2 3 6.500 7 1-5 5 1.200 7L12 18l-6.200 3.500 1.200-7-5-5 7-1z" fill="#777" stroke="#777" stroke-width="2" stroke-linejoin="round"/></svg></button>
  </aside>

  <div class="d-flex flex-column flex-grow-1 stretch">
    <div class="docs d-flex flex-shrink-0">
      <div class="doc d-flex align-items-center"><svg width="16" height="16"><use href="#dps"/></svg><a href="#">视频教程</a><button class="plain" aria-label="关闭"><svg width="11" height="10"><use href="#shut"/></svg></button><svg class="tail" width="20" height="23" fill="url(#gTab)"><use href="#tail"/></svg></div>
      <div class="doc d-flex align-items-center"><svg width="16" height="16"><use href="#dps"/></svg><a href="#">欢迎使用DPS软件</a><button class="plain" aria-label="关闭"><svg width="11" height="10"><use href="#shut"/></svg></button><svg class="tail" width="20" height="23" fill="url(#gTab)"><use href="#tail"/></svg></div>
      <div class="doc d-flex align-items-center"><svg width="16" height="16"><use href="#dps"/></svg><a href="#">文化常识.dpsf</a><button class="plain" aria-label="关闭"><svg width="11" height="10"><use href="#shut"/></svg></button><svg class="tail" width="20" height="23" fill="url(#gTab)"><use href="#tail"/></svg></div>
      <div class="doc on d-flex align-items-center"><svg width="16" height="16"><use href="#dps"/></svg><a href="#">书-大16开软皮平装-文档20190104-1532.dpsf*</a><button class="plain" aria-label="关闭"><svg width="11" height="10"><use href="#shut"/></svg></button><svg class="tail" width="20" height="23" fill="url(#gHot)"><use href="#tail"/></svg></div>
      <div class="doc d-flex align-items-center"><svg width="16" height="16"><use href="#dps"/></svg><a href="#">选择模板-新建文档</a><button class="plain" aria-label="关闭"><svg width="11" height="10"><use href="#shut"/></svg></button><svg class="tail" width="20" height="23" fill="url(#gTab)"><use href="#tail"/></svg></div>
    </div>

    <div class="d-flex flex-grow-1 stretch">
      <div class="d-flex flex-column flex-grow-1 stretch">
        <div class="d-flex flex-shrink-0">
          <div class="corner"><svg width="16" height="16" stroke="#000" stroke-dasharray="1 1"><path d="M0 9.500h16M10.500 0v16"/></svg></div>
          <svg class="rule-h flex-grow-1 flex-shrink-1" id="ruleH" width="100%"></svg>
        </div>
        <div class="d-flex flex-grow-1 stretch">
          <svg class="rule-v" id="ruleV"></svg>
          <div class="desk flex-grow-1">
            <div class="gutter"></div>
            <div class="edge"></div>
            <svg class="frame left-page" height="1000"><path d="M.5 1000V.5h584V1000" fill="none" stroke="#777" stroke-dasharray="1 2"/></svg>
            <svg class="frame right-page" height="1000"><path d="M.5 1000V.5h584V1000" fill="none" stroke="#777" stroke-dasharray="1 2"/></svg>
            <div class="fold-line"></div>
            <div class="textbox d-flex align-items-center justify-content-center">营员保障</div>
          </div>
        </div>
      </div>
      <div class="scroll d-flex flex-column align-items-center justify-content-between">
        <div class="d-flex flex-column align-items-center">
          <button class="plain arrow" aria-label="向上"><svg width="10" height="5"><path d="M0 5h10L5 0z" fill="#555"/></svg></button>
          <button class="plain thumb" aria-label="滚动"><svg width="8" height="9" stroke="#666"><path d="M0 .5h8M0 2.500h8M0 4.500h8M0 6.500h8M0 8.500h8"/></svg></button>
        </div>
        <button class="plain arrow" aria-label="向下"><svg width="10" height="5"><path d="M0 0h10L5 5z" fill="#555"/></svg></button>
      </div>
    </div>
  </div>
</main>

<script src="https://cdn.jsdelivr.net/npm/bootstrap@5.3.0/dist/js/bootstrap.bundle.min.js"></script>
<script>
  // Rulers: one tick per millimetre, a long tick and a number every ten.
  const SCALE = 3.438;
  function ruler(el, length, origin, from, vertical) {
    let d = '', labels = '';
    for (let mm = from; origin + mm * SCALE < length - 1; mm++) {
      const at = Math.round(origin + mm * SCALE) + 0.5;
      const major = mm % 10 === 0;
      const start = major ? 4 : 12;
      d += vertical ? `M${start} ${at}H16` : `M${at} ${start}V16`;
      if (major) labels += vertical
        ? `<text transform="translate(9 ${at + 2}) rotate(-90)" text-anchor="end">${mm}</text>`
        : `<text x="${at + 1}" y="9">${mm}</text>`;
    }
    const marker = vertical
      ? '<path d="M0 219.5h17" stroke="red"/><path d="M0 217l5 1v3l-5 1z" fill="red"/>'
      : '<path d="M378.5 0v16" stroke="red"/><path d="M376 0h5l-1 4h-3z" fill="red"/>';
    el.innerHTML = `<path d="${d}" stroke="#000"/>${labels}${marker}`;
  }
  function drawRulers() {
    const h = document.getElementById('ruleH'), v = document.getElementById('ruleV');
    ruler(h, h.getBoundingClientRect().width, 73, -21, false);
    ruler(v, v.getBoundingClientRect().height, -27, 8, true);
  }
  drawRulers();
  addEventListener('resize', drawRulers);
</script>
</body>
</html>
